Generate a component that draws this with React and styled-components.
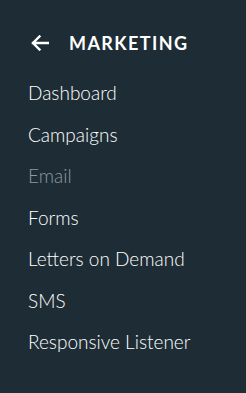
import React from "react";
import styled, { createGlobalStyle } from "styled-components";

const Global = createGlobalStyle`
    html, body {
        margin: 0;
        padding: 0;
        background: #1e2d35;
    }
`;

const Panel = styled.nav`
    width: 246px;
    height: 393px;
    box-sizing: border-box;
    padding: 30px 28px 0 28px;
    background: #1e2d35;
    font-family: Lato, "Open Sans", sans-serif;
    color: #ffffff;
`;

const Header = styled.div`
    display: flex;
    align-items: center;
    gap: 20px;
    height: 26px;
    padding-left: 3px;
`;

const Title = styled.h2`
    margin: 0;
    font-size: 18px;
    font-weight: 700;
    letter-spacing: 1.4px;
    color: #ffffff;
`;

const Items = styled.ul`
    list-style: none;
    margin: 16px 0 0 0;
    padding: 0;
    display: flex;
    flex-direction: column;
`;

const Item = styled.li`
    height: 41.5px;
    display: flex;
    align-items: center;
    font-size: 19px;
    font-weight: 300;
    color: ${ ( { muted } ) => ( muted ? "#8a9aa6" : "#ffffff" ) };
`;

const BackArrow = () => (
    <svg width="18" height="16" viewBox="0 0 18 16" fill="none">
        <path d="M17 8H2M8.5 1.5L2 8l6.5 6.5" stroke="#ffffff" strokeWidth="2.4" strokeLinecap="square" />
    </svg>
);

const links = [
    { label: "Dashboard" },
    { label: "Campaigns" },
    { label: "Email", muted: true },
    { label: "Forms" },
    { label: "Letters on Demand" },
    { label: "SMS" },
    { label: "Responsive Listener" },
];

const App = () => (
    <>
        <Global />
        <Panel>
            <Header>
                <BackArrow />
                <Title>MARKETING</Title>
            </Header>
            <Items>
                { links.map( ( l ) => (
                    <Item key={ l.label } muted={ l.muted }>{ l.label }</Item>
                ) ) }
            </Items>
        </Panel>
    </>
);

export default App;
